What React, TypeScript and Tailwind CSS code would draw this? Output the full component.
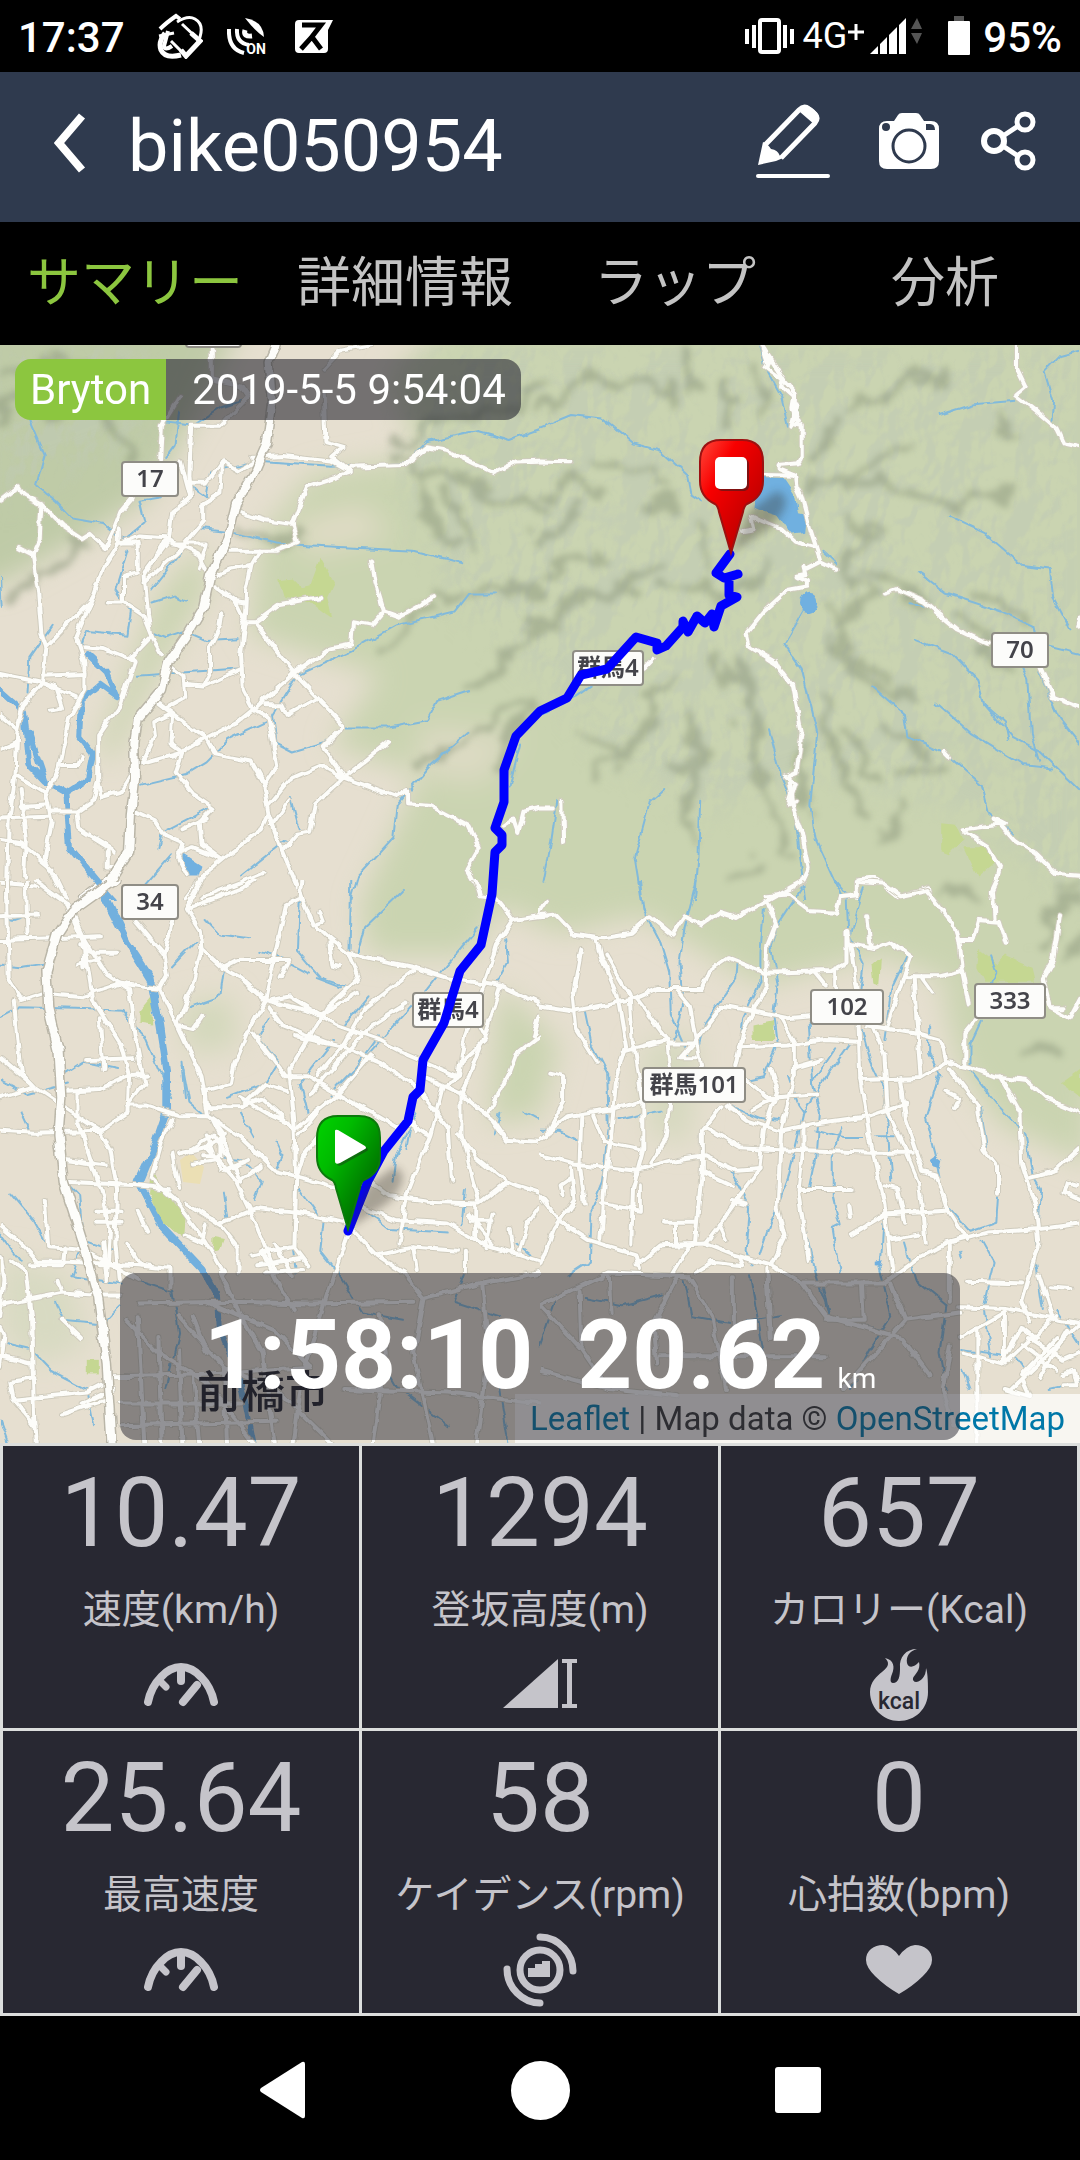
import React, { useState } from "react";

interface TileProps {
  x: number;
  y: number;
  height: number;
  shades: string[];
  parks: string[];
  lakes: string[];
  rivers: string[];
  wideRivers: string[];
  roads: string[];
  highways: string[];
}

interface ShieldProps {
  x: number;
  y: number;
  width: number;
  label: string;
}

interface StatProps {
  value: string;
  label: string;
  icon: React.ReactNode;
}

// every tile is drawn on a 1568 x 1568 grid
const tiles: TileProps[] = [
  {
    // north west
    x: 0,
    y: -5,
    height: 560,
    shades: [
      "M1200 370L1250 480L1290 580L1330 560M1300 430L1400 590M1180 350L1330 390L1568 470",
      "M1150 300L1250 240L1480 190L1568 130M1568 690L1440 700L1350 690L1250 720",
      "M1568 790L1480 860L1440 940L1350 980M1568 1000L1440 1030L1400 1090L1200 1200",
      "M0 200L100 160L200 200M20 100L200 60L350 90M300 200L380 300L340 330M220 580L130 660L30 700",
      "M1568 1010L1480 1100L1450 1200M700 520L860 560M1240 760L1100 860",
    ],
    parks: ["M805 670L850 665L880 695L900 690L930 610L970 680L950 720L965 780L910 740L820 720Z"],
    lakes: ["M530 1440L585 1475L575 1505L545 1505L528 1480Z"],
    wideRivers: [
      "M255 880L310 930L340 1000L290 965L235 1010L230 1110L270 1160L255 1230L190 1270L200 1420L290 1525L330 1568",
      "M0 980L70 1040L85 1190L130 1235L185 1265M85 1100L130 1230",
    ],
    rivers: [
      "M85 220L130 320L105 410L160 450L210 500L300 515L360 560L420 510L405 450L470 440",
      "M520 200L510 290L480 330M540 400L600 440L610 370L735 340L960 355L1180 345L1240 285L1390 255L1480 280L1568 250",
      "M590 530L680 540L800 570L1000 580L1200 590L1345 625M370 590L335 700L380 760L370 825L250 815L235 860",
      "M520 600L440 700M440 735L510 715L540 730M445 820L480 835L540 815L600 840L690 835M400 940L540 930L690 920",
      "M860 940L1020 870L1150 800L1320 760L1360 710L1440 710",
      "M860 940L790 1050L800 1130L850 1155L940 1130L1000 1085L1130 1085L1240 1065L1270 1010L1365 980",
      "M770 1070L660 1120L600 1180L540 1215L410 1245M1360 1100L1250 1190L1155 1300L1145 1390L1040 1500L1020 1568",
      "M845 1280L870 1370M610 1310L470 1380L460 1420M150 800L85 890L80 990M830 1400L700 1500M420 1530L500 1440",
      "M480 230L560 240L640 190L700 170M0 660L5 750M1510 1130L1480 1250",
    ],
    highways: [
      "M800 14L780 60L790 180L775 290L735 380L685 460L660 560L610 660L590 750L540 830L490 900L470 980L400 1060L390 1130L392 1230L380 1330L375 1430L330 1500L240 1568",
    ],
    roads: [
      "M615 30L615 110L700 130L720 160L640 240L555 240L550 380L555 440L500 480L490 560L420 650",
      "M465 335L470 240L520 160M0 450L55 410L70 435L120 460L180 520L235 555L260 540L305 580L330 530L350 480L385 440",
      "M120 460L115 560L95 600L110 700L120 820L135 860L125 960L70 1020L50 1100L45 1220L25 1350L20 1568M55 580L95 600",
      "M345 530L345 570L400 570L400 640M345 570L300 640L265 730L220 830L245 900L245 980L200 1060L170 1200L135 1280L150 1350L130 1450L190 1568",
      "M265 730L135 860M0 935L125 960L220 1000M125 940L245 935",
      "M245 860L300 865L390 900L350 1020L285 1110L285 1230L295 1280L350 1265L390 1200",
      "M350 570L400 550L480 555L575 600L610 660M480 560L420 660L430 770L440 830L380 890L390 900M440 830L470 880",
      "M310 735L360 735L415 770L440 830M400 650L360 660L360 735M420 680L520 590L590 510L590 460L640 430L645 340L690 365L735 340",
      "M555 400L600 400L645 340M525 340L550 430M500 570L600 570L580 640",
      "M735 330L820 325L960 340L1015 370L890 410L850 510L865 565L800 590L660 590M690 480L770 505L850 515",
      "M1015 355L1175 350L1240 300L1300 310L1430 370L1500 340L1568 338M940 150L945 285L1000 300L965 330L1015 370M940 80L990 30L1080 14",
      "M610 665L670 640L730 630L755 590M730 630L715 700L710 790L700 880L705 980L735 1035L780 1060L805 1190L765 1250L780 1330L820 1430L880 1568",
      "M625 690L680 730L710 790L740 790L810 740L930 720M680 730L710 735M740 790L860 940L1000 1080L940 1140L1000 1225",
      "M735 1035L860 930L965 860L1020 850L1025 790L1080 800L1115 760L1160 775L1260 720M1080 620L1090 680L1115 760",
      "M770 1020L820 1020L835 1050L920 1005M735 1035L690 1070L600 1115L530 1155L400 1190",
      "M645 765L640 800L610 860L610 930L590 970M490 910L530 940L535 1000L480 1030M535 965L590 970L700 920",
      "M440 1000L550 1080L600 1115L625 1160L730 1180L765 1240M500 1045L495 1130L530 1155L510 1210L560 1270L620 1310L580 1350L585 1410L640 1450",
      "M415 1180L450 1110L445 1070L500 1045M780 1330L760 1370L650 1450L600 1490L540 1568M640 1450L560 1420L520 1440",
      "M780 1300L840 1230L935 1190L1000 1225L1150 1280L1185 1260L1185 1300L1250 1305L1360 1360L1390 1420L1355 1480L1400 1560",
      "M1000 1225L1130 1125M1000 1225L915 1300L900 1380L860 1385L820 1430M790 1360L840 1290",
      "M150 1320L225 1320L270 1290L285 1230M225 1320L230 1370L330 1430M395 1320L450 1345L480 1390L530 1410L520 1450L545 1500",
      "M0 1050L50 1090M50 1220L135 1270M0 1340L140 1335M0 1400L60 1410L150 1480M0 1520L130 1530M60 1260L75 1400L70 1500",
      "M1568 1310L1520 1320L1505 1380L1490 1340L1460 1360M590 1560L700 1520L765 1495M310 1430L310 1480L350 1480M145 1035L180 1030L160 970L125 960M180 1190L230 1190L240 1165",
      "M60 1305L140 1300M0 1150L45 1130M530 1370L600 1340",
    ],
  },
  {
    // north east
    x: 540,
    y: -5,
    height: 560,
    shades: [
      "M0 190L80 150L150 90L200 130L340 100L420 180M420 40L450 150M540 120L545 260M620 60L640 200",
      "M780 400L950 410L1100 430L1300 450L1390 420M900 500L950 560L900 640L960 720L880 800",
      "M850 720L880 900L960 960L1100 1000M900 520L980 520M840 880L900 900M860 780L900 860",
      "M520 880L590 1000L620 1140L680 1300L720 1420M450 1060L460 1170L430 1300L440 1400",
      "M140 1230L240 1150L310 1070L330 1000L380 980M150 1110L230 1150M280 1110L250 1180M580 900L600 1020",
      "M770 1140L760 1300M820 850L1000 940M900 200L1050 120L1200 100M1100 300L960 350L860 390M1340 200L1370 280",
      "M0 560L120 480M300 460L400 470M320 400L380 420M0 800L120 720L250 710M340 690L600 700L680 620",
      "M820 1000L870 1200L940 1340M1040 1200L1160 1200M1280 680L1420 780M1200 780L1350 900M960 640L1100 740",
      "M0 430L90 380L170 440M180 330L320 360M0 650L180 600M460 520L500 640M380 1180L430 1180M860 240L820 330",
      "M1000 1050L1120 1160M1060 1300L1010 1400M560 1500L640 1460M900 1080L960 1240M200 700L330 620",
    ],
    parks: ["M1165 1350L1210 1355L1230 1400L1190 1440L1165 1430Z", "M1230 1420L1290 1420L1325 1460L1270 1505Z"],
    lakes: [
      "M630 385L710 390L745 440L752 485L775 490L770 540L730 545L690 490L620 470Z",
      "M755 735a25 27 0 1 0 50 0a25 27 0 1 0 -50 0Z",
    ],
    wideRivers: [],
    rivers: [
      "M640 20L660 90L700 160L720 240M0 245L90 210L180 220L270 290L350 310L430 380L440 430L470 450M1160 210L1260 180L1380 170",
      "M1568 30L1510 45L1465 90L1490 170L1485 230M1190 495L1290 540L1400 630L1480 640L1490 720L1540 810",
      "M1100 650L1180 710L1340 760L1430 800L1440 850L1568 880M1070 740L1130 745L1200 800",
      "M1090 840L1200 880L1270 950L1290 1020L1370 1110L1450 1150L1568 1260M965 970L1060 1050L1070 1110L1180 1160L1280 1245L1300 1320L1370 1380",
      "M1150 1015L1250 1100L1400 1190L1490 1200M1390 900L1415 950L1425 1100L1450 1180M770 750L710 850L760 920L805 1100L785 1300L800 1400L880 1568",
      "M665 1090L700 1220L740 1320L770 1568M355 1260L320 1290L275 1450L295 1568M465 1290L460 1450L450 1568M50 1290L30 1420L10 1520",
      "M160 960L100 1000L0 1050M1450 930L1510 1060L1568 1130M820 590L860 625M1290 1020L1350 1070L1360 1120",
    ],
    highways: [],
    roads: [
      "M645 14L665 60L655 75L705 110L700 130L735 160L730 190L745 220L735 235L760 240L760 330L750 345L690 350L690 360L740 380",
      "M650 20L670 50L690 80L715 120L740 150L740 200L755 230M740 380L745 410L760 440L785 530L815 620L860 640",
      "M650 378L740 380M610 490L640 505L700 530L740 565L800 580M610 490L620 530L590 535M660 60L650 30M745 180L730 240",
      "M815 620L775 640L765 635L770 655L745 660L775 675L775 690L720 700L650 760L600 820L610 860L680 900L735 970L760 1100L745 1210L720 1220L735 1310L760 1380L780 1480L760 1520L660 1568",
      "M660 895L700 920L690 900M710 1220L740 1240L720 1300L745 1290M1385 14L1385 80L1410 130L1380 155L1440 200L1500 250L1520 290L1568 300",
      "M1005 710L1040 700L1110 730L1210 810L1300 850M1450 910L1490 1000L1568 1030",
      "M1230 1370L1350 1355L1320 1340L1375 1400L1440 1440L1500 1495L1568 1500M1235 1380L1300 1420L1335 1480L1310 1568",
      "M920 1568L925 1510L970 1505L1040 1560L1130 1535L1135 1568M0 340L85 342M0 1312L40 1312M65 1290L67 1405M300 920L330 890M1175 1155L1190 1170M1568 780L1560 800",
    ],
  },
  {
    // south west
    x: 0,
    y: 535,
    height: 570,
    shades: [],
    parks: [
      "M440 800L500 870L540 910L535 985L470 940L430 860Z",
      "M405 360L440 320L445 400L405 395Z",
      "M252 1320h35v40h-35Z",
      "M620 985L650 990L640 1015L618 1020Z",
    ],
    lakes: [],
    wideRivers: [
      "M280 0L300 30L370 170L440 270L465 400L485 520L485 640L440 760L405 840L470 950L590 1070L630 1140L635 1230L700 1380L740 1568",
      "M302 50L370 175L435 275L460 400L480 520L480 640L440 750L400 830L465 950L585 1070L625 1140",
    ],
    rivers: [
      "M0 235L60 240L130 230M0 380L60 350L250 355L350 360L420 430L460 520L500 600M190 530L240 500L340 520M1020 0L1015 190",
      "M1170 30L1060 130L1040 200M870 60L865 200L930 270L1000 290M500 240L570 170M650 250L640 320L550 350M530 510L550 610L600 650",
      "M780 380L750 430L810 500L770 560L660 600M1470 160L1475 230L1440 290M1390 130L1290 240L1240 300L1080 470L960 590",
      "M1100 430L1000 560M970 440L870 560L890 640M1210 640L1150 760L1140 830M620 760L700 770L760 830L740 880M650 860L660 930",
      "M30 860L100 940L130 990M190 830L230 870L240 990L330 1020M0 970L60 1050M940 930L930 1020L980 1080L1050 1190L1170 1210",
      "M0 1270L90 1290L150 1350L250 1400L270 1500M160 1160L180 1210L300 1220L350 1170M870 850L930 930M1050 900L1130 960L1300 970",
      "M1350 850L1340 950M0 1490L30 1568M600 110L640 150L720 160M0 100L40 110L100 90M0 550L80 590L200 560M60 640L90 700",
      "M750 195L830 215M840 230L900 260M920 270L990 295M1450 640L1440 700M1520 635L1568 660M1190 690L1180 740M540 600L530 500",
      "M400 1100L500 1130L520 1250L480 1400M1100 1300L1160 1400L1300 1500M1450 1400L1480 1568M1350 1080L1320 1160L1450 1200M1500 1000L1540 1030",
      "M800 720L820 760L800 800M700 640L740 710M1070 320L1000 400M850 1010L860 1080M240 1000L210 1090L350 1110",
    ],
    highways: [
      "M335 0L210 85L165 150L135 250L140 350L170 470L178 600L170 700L185 830L245 1010L285 1150L310 1330L325 1568",
    ],
    roads: [
      "M0 100L110 95M20 0L25 270L65 330L130 310L235 320L350 285L465 300M75 0L80 150M0 165L160 160L290 155",
      "M100 0L200 70L250 170L310 260L375 300L390 420L420 560L370 620M195 70L245 180L270 330L350 450L375 540L370 640",
      "M230 180L280 200L340 200M230 230L290 215M240 160L245 240M395 115L475 205L485 265L465 300L515 400L585 540L605 650M500 115L475 205",
      "M585 0L540 80L580 140L585 190L650 245L700 270L770 330L720 420L680 510L670 560L600 580M540 80L640 45L710 20L740 0",
      "M585 190L560 290L515 400L560 410L590 370M875 0L870 50L830 70L800 200L770 330M870 30L910 120L955 160L1010 200L1100 220L1200 240L1300 270L1450 290L1568 340",
      "M910 125L940 115L930 90M955 160L965 235L985 240M640 245L690 220L840 220L815 270M1380 0L1395 45L1440 50L1490 110L1568 100",
      "M1490 110L1440 180L1415 260L1350 430L1330 540L1285 570L1250 700L1180 870M1450 300L1410 420L1340 590L1340 700L1390 880",
      "M1010 200L1040 270L950 350L840 520L855 670L860 820L855 1010L895 1060M1200 250L1060 350L1000 450L920 540",
      "M770 330L900 360L980 400L1100 440L1180 480L1330 540M790 330L840 320L930 370L1040 310M780 350L820 400L960 450",
      "M735 420L830 540L890 540L980 590L1080 640L1150 680L1200 670L1210 690M860 430L1000 460L1100 500L1210 570L1300 680L1310 830",
      "M1230 540L1340 590L1430 660L1470 715L1568 720M1568 430L1500 480L1480 530L1420 640M1568 370L1550 430M1380 380L1410 440L1340 500",
      "M600 580L605 625L700 625L760 600L850 680M700 625L770 560L830 580M190 580L290 575L370 540L430 535M700 600L770 640L860 680L980 590",
      "M370 620L420 620L520 650L610 650L700 710L800 800L900 825L990 850M0 690L100 695L290 690L320 740L340 850L335 1000L345 1100",
      "M0 490L100 570L210 640L290 690L370 640M0 600L100 570L60 530L40 330M225 580L225 660L300 870L320 960L310 1100",
      "M190 830L400 840L490 850M190 770L310 785M500 660L470 720L440 820L500 870L600 1000L650 1080M250 495L390 490M290 380L300 520",
      "M520 750L600 735L680 820L740 940L800 1080M600 735L650 700L620 660L660 740L700 830M690 830L760 790M590 760L640 760L640 710M500 750L520 850",
      "M640 945L740 905L860 915L1000 940L1090 1030L1170 1080M540 890L640 950L690 1010L690 1080M1010 970L970 1080M540 980L590 1000L600 950",
      "M1060 820L1130 870L1240 885L1390 890L1470 830L1568 860M1470 830L1380 760L1330 700M1240 700L1180 660M870 700L920 640M860 820L880 760L940 690",
      "M1050 900L1150 935L1300 945L1400 1000L1568 1050M1090 1030L1190 1010L1330 1020M1360 920L1430 1000M1380 890L1380 990M1430 920L1410 1010M1370 940L1430 940",
      "M0 950L50 990L110 1050L200 1050L400 1060L495 1070L495 1120M130 880L140 1010L210 1015L250 1020L400 1100M30 1050L75 1080L90 1200L100 1500L105 1568",
      "M0 1170L180 1135L270 1140L350 1140M30 1380L100 1370M40 1430L250 1410L310 1380M30 1380L40 1430L100 1500M180 1210L235 1260M0 1310L90 1330",
      "M0 1200L10 1100L0 1040M170 1100L180 1130M90 1060L180 1060L185 1010M280 910L350 910M280 940L350 940M400 910L430 970M370 1000L410 1060",
      "M370 1210L460 1300L600 1380L750 1568M520 1200L650 1340L800 1400L980 1568M400 1165L650 1160L900 1165L1200 1160M640 1080L700 1200L760 1300L800 1568",
      "M330 1365L560 1360L900 1340M970 1080L930 1200L880 1350L850 1568M1170 1080L1230 1150L1200 1300L1260 1568M1230 1150L1400 1110L1568 1080",
      "M400 1200L420 1568M460 1260L470 1568M520 1300L530 1568M350 1440L700 1440M350 1500L800 1490M560 1200L600 1300M600 1160L800 1240L900 1340M560 1360L580 1568M650 1340L660 1568M1000 1400L1300 1410L1568 1440M1100 1200L1120 1300L1080 1568M1400 1110L1420 1300L1380 1568",
      "M760 1020L800 1100L850 1180M730 1030L850 1010M750 1060L870 1040M770 1080L880 1070M800 1000L850 1090M290 1060L350 1060M300 1000L310 1100M330 1400L240 1440M180 1470L310 1430M0 1340L10 1250L0 1230",
      "M540 750L620 700L680 790M560 780L630 770M600 700L640 800M650 800L720 770M900 590L1000 480L1080 400L1180 340M980 590L1080 480M1480 960L1490 1030M1568 900L1530 950L1510 1020M1350 1020L1350 1080M1160 1000L1180 880M1200 1010L1210 1070",
    ],
  },
  {
    // south east
    x: 540,
    y: 535,
    height: 570,
    shades: ["M1568 60L1480 100L1450 180M1568 20L1520 40M1568 160L1530 220M1180 30L1260 20M1400 470L1500 460"],
    parks: [
      "M1275 190L1330 230L1350 205L1430 240L1440 280L1290 280L1270 240Z",
      "M620 400L680 388L680 440L620 440Z",
      "M960 240L990 215L985 290L965 285Z",
      "M1568 520L1510 560L1568 600Z",
    ],
    lakes: [
      "M1135 770L1150 760L1165 770L1160 790L1140 785Z",
      "M975 1050L995 1045L990 1062L975 1060Z",
    ],
    wideRivers: [],
    rivers: [
      "M290 0L300 80L350 170L375 250L380 370L430 480M455 0L420 130L405 230L415 350L390 440M760 20L690 120L670 180L690 290L680 370L690 450L650 540L600 550",
      "M650 80L640 200L640 280L590 380L575 500M575 220L570 270L480 390L460 460M855 0L890 40L895 140L940 230L930 300M940 20L900 160",
      "M1065 210L1020 300L1000 440M130 360L150 450L195 530L200 680L180 830L150 900L145 1050L80 1090M900 450L840 530L765 640L720 820L680 920L640 1030",
      "M780 390L790 560L810 640L800 760L780 850M935 410L960 500L1000 580L1010 680L1020 830M1155 540L1120 650L1150 760L1170 880L1250 965L1325 940L1330 870",
      "M1195 530L1280 630L1300 750M1280 390L1250 450L1250 520L1330 620L1410 700L1430 810L1455 850L1440 1050L1460 1180",
      "M800 690L880 710L940 710M980 705L1030 705M875 680L850 760L850 870L870 950L850 960L870 1080M555 800L610 900L600 1020L620 1060M550 620L640 655L700 660",
      "M225 660L350 635M1285 990L1320 1050L1290 1170L1310 1310M750 880L800 1080L840 1200M1060 1000L1090 1100L1180 1170M0 690L60 690L110 715",
      "M130 1150L240 1170L360 1140M610 1090L650 1300M985 1060L1020 1200L960 1290L900 1400M820 1110L840 1200L1000 1240M1180 1170L1160 1300L1180 1400M50 1140L0 1280",
      "M1310 210L1325 250L1310 280M1220 1020L1225 1040M1130 400L1130 480L1160 540M1000 900L990 1050M720 540L750 620L765 640M860 460L790 560",
      "M420 1100L440 1200L560 1220L700 1200M1220 1290L1380 1310L1420 1360M1500 1180L1568 1280M1230 1350L1250 1400M1480 1400L1568 1380",
    ],
    highways: [],
    roads: [
      "M0 100L45 95L100 150L170 160L265 145L320 100L385 150L420 100L470 125L520 90L570 105L655 60L760 5M0 90L20 60",
      "M655 45L720 40L780 85L860 90L870 50L920 45L920 5L1000 10L1050 45L1125 30L1170 85L1200 120L1215 165L1260 165L1275 110L1335 115L1355 175M1320 110L1315 30L1330 0",
      "M165 165L175 210L225 320L250 460L220 560L205 720L185 860L175 990M190 205L260 320L270 450L300 620L300 740L270 850L265 1000",
      "M0 345L100 360L280 325L340 300L470 300L490 250L545 215L650 255L850 250L890 230L890 140M120 190L95 320L105 410L165 500",
      "M660 60L685 120L660 180L655 290L590 420L570 515M280 325L370 440L380 560L365 710L320 780M400 310L435 350L460 480L465 510",
      "M370 450L445 450L530 345L610 360L720 380L785 375M250 470L365 440M445 450L410 490L450 490M800 255L830 290M860 240L860 295M895 140L920 300",
      "M900 175L970 190L1020 170L1075 210L1010 400M950 100L960 180M1065 265L1160 265L1225 250L1215 165M1225 250L1245 340",
      "M1085 265L1090 340L1105 540M1110 270L1140 310M925 395L930 550L960 720L1000 890L1020 1080M965 400L1000 480L1010 640L1060 740L1100 830",
      "M580 460L720 455L830 440L920 445M700 380L740 450L740 540L700 690L690 900L710 980L670 1060M740 515L815 495",
      "M950 400L1110 425L1165 440L1180 500L1105 545L930 550M1180 500L1250 515L1320 540L1410 550L1470 600L1568 640M1265 385L1235 420L1235 510",
      "M1190 520L1270 620L1290 740L1330 790L1330 860M1335 540L1395 640L1400 780L1440 900L1450 1000L1400 1160L1420 1210",
      "M0 715L40 680L80 650L220 630L290 610M30 530L70 540L70 610L20 700M0 755L100 780L280 800L400 770L480 760L570 800L640 795",
      "M530 620L470 690L470 800L450 1000M545 620L600 660L700 690L800 670L950 650L1060 615M480 680L580 735L680 740L960 750L1080 750",
      "M640 795L650 690L690 580L670 520M600 550L660 600L800 590M620 630L680 600M640 795L580 870L520 950L480 1000M470 800L560 840",
      "M765 670L765 740L750 860L780 1045M760 850L905 850M895 895L900 930M1420 820L1500 800L1568 740M1045 545L1060 660L1110 800L1150 810L1180 900L1240 990",
      "M905 975L1000 920L1180 910M1100 830L1110 910L1120 1000M1000 840L1040 850L1060 940M1010 990L1100 975M0 870L60 940L140 990L280 1030L290 1070",
      "M0 1060L40 960L100 880L90 790M280 1060L350 1005L480 1000L560 1030L670 1060L760 1110L1000 1110L1100 1040L1180 1000L1300 970L1450 960L1568 945",
      "M360 940L450 940M395 940L395 1000M175 890L290 910L290 840M120 650L115 780L130 890M155 650L185 720L290 740M65 870L60 840L90 820M520 950L540 990M560 880L600 890",
      "M1510 100L1490 220L1460 270L1480 350L1540 380L1568 330M1480 350L1520 350M1190 1005L1190 1160M1240 1105L1400 1110M1220 1175L1350 1180L1568 1220M1480 1120L1540 1125",
      "M1220 1260L1350 1190L1350 1330L1500 1200M1230 1300L1340 1330L1400 1230L1440 1260M1370 1400L1568 1220M1270 1230L1270 1568M1450 1090L1490 1210M1568 840L1530 830L1520 860L1568 880",
      "M1350 1400L1420 1420L1400 1380M1520 1360L1550 1350L1560 1390L1520 1390M1400 1280L1500 1350M1420 1260L1520 1320L1568 1300M1180 580L1220 600L1205 630M1400 1360L1500 1260M1450 1370L1530 1240",
      "M0 1170L200 1080L430 1090M0 1170L120 1290L200 1400L400 1420M350 1310L830 1310M430 1090L500 1200L540 1400M660 1070L670 1260M760 1110L830 1200L1050 1260L1130 1360",
      "M1020 1110L1060 1210L1220 1190M1060 1210L880 1400M830 1210L940 1210L935 1110M400 1090L330 1220L340 1330M560 1090L560 1300M115 1130L120 1280M380 1090L430 1010M450 1080L500 1050L590 1060L580 1040M200 1090L205 1190M0 1350L200 1400M1190 1280L1170 1400L1200 1500",
    ],
  },
];

const shields: ShieldProps[] = [
  { x: 186, y: -32, width: 55, label: "" },
  { x: 122, y: 117, width: 56, label: "17" },
  { x: 992, y: 288, width: 56, label: "70" },
  { x: 573, y: 306, width: 70, label: "群馬4" },
  { x: 122, y: 540, width: 56, label: "34" },
  { x: 811, y: 645, width: 72, label: "102" },
  { x: 975, y: 639, width: 70, label: "333" },
  { x: 413, y: 648, width: 70, label: "群馬4" },
  { x: 643, y: 723, width: 102, label: "群馬101" },
];

const track =
  "730,209 716,228 724,233 738,229 729,232 729,250 737,252 721,261 714,282 712,269 705,278 697,271 688,287 683,276 683,282 666,301 657,305 657,298 636,292 607,324 581,330 567,353 540,366 516,391 504,425 504,457 495,483 502,490 502,500 495,507 492,549 481,600 460,626 444,678 423,715 420,745 413,752 408,776 384,806 368,836 348,886";

const line = (d: string, stroke: string, strokeWidth: number) => (
  <path key={d} d={d} stroke={stroke} strokeWidth={strokeWidth} vectorEffect="non-scaling-stroke" />
);

const Tile: React.FC<TileProps> = ({
  x,
  y,
  height,
  parks,
  lakes,
  rivers,
  wideRivers,
  roads,
  highways,
}) => (
  <svg x={x} y={y} width="540" height={height} viewBox="0 0 1568 1568" preserveAspectRatio="none">
    <g fill="none" strokeLinecap="round" strokeLinejoin="round">
      {parks.map((d) => (
        <path key={d} d={d} fill="#c5d792" />
      ))}
      {rivers.map((d) => line(d, "#82badb", 2))}
      {wideRivers.map((d) => line(d, "#72b0de", 6))}
      {lakes.map((d) => (
        <path key={d} d={d} fill="#70b0e0" />
      ))}
      {roads.map((d) => line(d, "#cfcbbd", 6))}
      {roads.map((d) => line(d, "#fdfdfa", 4))}
      {highways.map((d) => line(d, "#bab6a8", 11))}
      {highways.map((d) => line(d, "#fdfdfa", 8))}
    </g>
  </svg>
);

// pin of 65 x 116, the tip is at the bottom
const Marker = ({ x, y, type }: { x: number; y: number; type: "start" | "stop" }) => (
  <g transform={`translate(${x} ${y})`}>
    <path d="M32 114L50 72L78 52Q98 60 72 88Z" fill="#332f28" opacity="0.35" filter="url(#soft)" />
    <path
      d="M22 1H43Q64 1 64 23V42Q64 58 48 65Q45 67 44 73L32 114L20 73Q19 67 16 65Q1 58 1 42V23Q1 1 22 1Z"
      fill={type === "start" ? "url(#pinGreen)" : "url(#pinRed)"}
      stroke={type === "start" ? "#0b7a0b" : "#9c1111"}
      strokeWidth="2"
    />
    {type === "start" ? (
      <path
        d="M19 16Q19 14 22 15L49 31Q51 33 49 34L24 48Q19 50 19 46Z"
        fill="#222"
        opacity="0.4"
        transform="translate(2 2)"
      />
    ) : (
      <rect x="18" y="20" width="32" height="32" rx="5" fill="#222" opacity="0.5" />
    )}
    {type === "start" ? (
      <path d="M19 16Q19 14 22 15L49 31Q51 33 49 34L24 48Q19 50 19 46Z" fill="#fff" />
    ) : (
      <rect x="16" y="18" width="32" height="32" rx="5" fill="#fff" />
    )}
  </g>
);

const RideMap = () => (
  <svg
    className="absolute inset-0 h-full w-full"
    viewBox="0 0 1080 1098"
    preserveAspectRatio="xMidYMid slice"
    role="img"
    aria-label="Map"
  >
    <defs>
      <filter id="soft" x="-20%" y="-20%" width="140%" height="140%">
        <feGaussianBlur stdDeviation="4" />
      </filter>
      <filter id="ground" x="-20%" y="-20%" width="140%" height="140%">
        <feGaussianBlur stdDeviation="14" />
      </filter>
      <filter id="wobble" filterUnits="userSpaceOnUse" x="-10" y="-10" width="1100" height="1118">
        <feTurbulence type="fractalNoise" baseFrequency="0.07" numOctaves="2" seed="3" />
        <feDisplacementMap in="SourceGraphic" scale="7" xChannelSelector="R" yChannelSelector="G" />
      </filter>
      <filter id="ridges" filterUnits="userSpaceOnUse" x="-10" y="-10" width="1100" height="1118">
        <feTurbulence type="fractalNoise" baseFrequency="0.03" numOctaves="3" seed="5" result="noise" />
        <feDisplacementMap in="SourceGraphic" in2="noise" scale="44" xChannelSelector="R" yChannelSelector="G" />
        <feGaussianBlur stdDeviation="3" />
      </filter>
      <filter id="relief" x="0" y="0" width="100%" height="100%">
        <feTurbulence type="fractalNoise" baseFrequency="0.022 0.014" numOctaves="4" seed="8" />
        <feGaussianBlur stdDeviation="1" />
        <feDiffuseLighting surfaceScale="40" lightingColor="#fff">
          <feDistantLight azimuth="225" elevation="50" />
        </feDiffuseLighting>
        <feColorMatrix values="0 0 0 0 0.53  0 0 0 0 0.59  0 0 0 0 0.46  -1.6 0 0 0 1.35" />
      </filter>
      <mask id="hills">
        <g fill="#fff" filter="url(#ground)">
          <path d="M440 0H1080V560L960 460L820 430L700 470L600 400L530 320L450 250L400 120Z" />
          <path d="M0 0H150L140 100L60 130L0 160Z" />
        </g>
      </mask>
      <linearGradient id="pinRed" x1="0" y1="0" x2="1" y2="1">
        <stop offset="0" stopColor="#ff4a3c" />
        <stop offset="0.3" stopColor="#f80000" />
        <stop offset="0.75" stopColor="#c20000" />
        <stop offset="1" stopColor="#8c0000" />
      </linearGradient>
      <linearGradient id="pinGreen" x1="0" y1="0" x2="1" y2="1">
        <stop offset="0" stopColor="#00d400" />
        <stop offset="0.3" stopColor="#00bb00" />
        <stop offset="0.7" stopColor="#007a00" />
        <stop offset="1" stopColor="#005500" />
      </linearGradient>
    </defs>

    {/* Ground */}
    <rect width="1080" height="1098" fill="#e6dfd0" />
    <g filter="url(#ground)" fill="#cad4b1">
      <path d="M-40 -40H250L200 60L150 150L90 190L0 240L-40 240Z" fill="#bfcba7" />
      <path d="M470 -40H1120V760L1020 690L960 640L880 610L760 640L640 570L560 590L500 560L470 610L370 610L360 560L420 430L330 400L380 330L250 290L260 190L310 130L420 110L390 30Z" />
      <path d="M160 250L200 200L210 240L150 340L110 420L100 400Z" />
      <path d="M500 640L560 700L540 770L490 780Z" />
      <path d="M940 640L1090 660V820L1000 780L960 720Z" />
      <path d="M180 660L230 650L240 700L190 710Z" fill="#d3d8bb" />
      <path d="M0 910L70 930L90 1000L40 1020L0 990Z" fill="#d8dac2" />
      <path d="M640 700L700 690L690 800L650 790Z" fill="#d6d9bf" />
      <path d="M290 180L360 160L390 190L310 210Z" fill="#e0dcc6" />
      <path d="M420 380L520 390L480 440L420 430Z" fill="#dcdac3" />
    </g>
    <g mask="url(#hills)">
      <rect width="1080" height="640" filter="url(#relief)" opacity="0.6" />
    </g>
    <g filter="url(#ridges)" opacity="0.5" fill="none" strokeLinecap="round" strokeLinejoin="round">
      {tiles.map(({ x, y, height, shades }) => (
        <svg
          key={`${x}-${y}`}
          x={x}
          y={y}
          width="540"
          height={height}
          viewBox="0 0 1568 1568"
          preserveAspectRatio="none"
          overflow="visible"
        >
          {shades.map((d) => line(d, "#8b967b", 9))}
        </svg>
      ))}
    </g>
    <path d="M180 815L191 807L204 822L200 839L183 837Z" fill="#ebdfb4" />

    <g filter="url(#wobble)">
      {tiles.map((tile) => (
        <Tile key={`${tile.x}-${tile.y}`} {...tile} />
      ))}
    </g>

    {/* Road numbers */}
    {shields.map(({ x, y, width, label }) => (
      <g key={`${x}-${y}`}>
        <rect x={x} y={y} width={width} height="34" rx="3" fill="#fcfcfa" stroke="#8f8d85" strokeWidth="2" />
        <text
          x={x + width / 2}
          y={y + 25}
          textAnchor="middle"
          className="fill-[#44444a] font-['Noto_Sans','Noto_Sans_CJK_JP',sans-serif] text-[24px] font-semibold"
        >
          {label}
        </text>
      </g>
    ))}
    <text
      x="263"
      y="1063"
      textAnchor="middle"
      className="fill-[#1c1c24] font-['Noto_Sans_CJK_JP',sans-serif] text-[44px] font-medium"
    >
      前橋市
    </text>

    {/* Track */}
    <polyline
      points={track}
      fill="none"
      stroke="#0000ff"
      strokeWidth="9"
      strokeLinecap="round"
      strokeLinejoin="round"
    />
    <Marker x={316} y={770} type="start" />
    <Marker x={699} y={94} type="stop" />
  </svg>
);

const GaugeIcon = () => (
  <svg width="74" height="74" viewBox="0 0 74 74" fill="none" stroke="#c5c4ca" strokeLinecap="round">
    <path d="M4 54Q7 39 17 29Q26 19 37 19Q48 19 57 29Q67 39 70 54" strokeWidth="8" />
    <path d="M37 20V33" strokeWidth="8" />
    <path d="M15 32L22 39" strokeWidth="7" />
    <path d="M39 54L53 37" strokeWidth="8" />
  </svg>
);

const SlopeIcon = () => (
  <svg width="74" height="74" viewBox="0 0 74 74" fill="#c5c4ca">
    <path d="M0 60L55 11V60Z" />
    <path d="M59 11H74V15H69V56H74V60H59V56H64V15H59Z" />
  </svg>
);

const FlameIcon = () => (
  <svg width="74" height="74" viewBox="0 0 74 74">
    <path
      d="M55 1C47 3 44 9 45 15C46 20 52 20 57 14C59 22 53 26 51 30C50 34 55 36 60 31C63 28 64 24 64 20C66 25 66 38 66 44C66 61 53 73 37 73C21 73 8 60 8 44C8 34 15 28 20 24C28 18 27 14 23 10C32 12 33 19 30 26C28 31 28 35 31 35C37 35 38 28 38 20C37 9 44 1 55 1Z"
      fill="#c5c4ca"
    />
    <text
      x="37"
      y="61"
      textAnchor="middle"
      className="fill-[#282832] font-['Roboto',sans-serif] text-[23px] font-medium"
    >
      kcal
    </text>
  </svg>
);

const CadenceIcon = () => (
  <svg width="74" height="74" viewBox="0 0 74 74" fill="none" stroke="#c5c4ca" strokeLinecap="round">
    <circle cx="37" cy="37" r="20" strokeWidth="7" />
    <path d="M37 4Q51 4 61 15Q70 25 70 38" strokeWidth="7" />
    <path d="M4 36Q4 50 14 60Q24 70 37 70" strokeWidth="7" />
    <path d="M25 35H32V31H39V28H47V44H25Z" fill="#c5c4ca" stroke="none" />
  </svg>
);

const HeartIcon = () => (
  <svg width="74" height="74" viewBox="0 0 74 74" fill="#c5c4ca">
    <path d="M37 61Q23 53 13 43Q4 34 4 27Q4 20 9 16Q14 12 21 12Q30 13 37 23Q44 13 53 12Q60 12 65 16Q70 20 70 27Q70 34 61 43Q51 53 37 61Z" />
  </svg>
);

const stats: StatProps[] = [
  { value: "10.47", label: "速度(km/h)", icon: <GaugeIcon /> },
  { value: "1294", label: "登坂高度(m)", icon: <SlopeIcon /> },
  { value: "657", label: "カロリー(Kcal)", icon: <FlameIcon /> },
  { value: "25.64", label: "最高速度", icon: <GaugeIcon /> },
  { value: "58", label: "ケイデンス(rpm)", icon: <CadenceIcon /> },
  { value: "0", label: "心拍数(bpm)", icon: <HeartIcon /> },
];

const tabs = ["サマリー", "詳細情報", "ラップ", "分析"];

const StatusBar = () => (
  <div className="flex h-[72px] items-center justify-between px-[18px] text-[42px] leading-[50px] font-medium text-white">
    <div className="flex items-center">
      <span className="pt-1">17:37</span>
      <svg className="ml-8" width="46" height="46" viewBox="0 0 46 46" fill="none" stroke="#fff">
        <path d="M3 16Q9 10 19 3L23 6" strokeWidth="4" />
        <path d="M20 9Q31 2 38 6Q47 11 43 24Q41 30 37 35" strokeWidth="3" />
        <path d="M25 11L43 28L29 43L14 28" strokeWidth="3" />
        <path d="M34 20L43 28L29 43L24 37" strokeWidth="5" />
        <path d="M8 20Q1 29 4 37Q8 46 24 42" strokeWidth="5" />
        <path d="M2 23L17 20" strokeWidth="3" />
        <path d="M11 18L7 33Q8 38 15 33" strokeWidth="4" />
      </svg>
      <svg className="ml-6" width="40" height="38" viewBox="0 0 40 38" fill="none" stroke="#fff" strokeWidth="4">
        <path d="M18 1Q36 4 37 20Q28 14 18 1Z" fill="#fff" stroke="none" />
        <path d="M18 13Q16 20 25 19" strokeWidth="5" />
        <path d="M10 12Q9 26 22 28" />
        <path d="M2 12Q1 32 17 36" />
        <text
          x="29"
          y="37"
          textAnchor="middle"
          stroke="none"
          className="fill-white font-['Roboto',sans-serif] text-[14px] leading-none font-bold"
        >
          ON
        </text>
      </svg>
      <svg className="ml-7" width="40" height="36" viewBox="0 0 40 36">
        <path d="M4 2H38L33 12V31Q33 35 29 35H4Q0 35 0 31V6Q0 2 4 2Z" fill="#fff" />
        <path d="M7 7H26L16 20L6 31M17 19L26 31" fill="none" stroke="#000" strokeWidth="5" />
      </svg>
    </div>
    <div className="flex items-center">
      <svg width="50" height="38" viewBox="0 0 50 38" fill="#fff">
        <rect x="15" y="3" width="19" height="32" rx="2" fill="none" stroke="#fff" strokeWidth="4" />
        <rect x="0" y="12" width="4" height="15" />
        <rect x="7" y="8" width="4" height="23" />
        <rect x="38" y="8" width="4" height="23" />
        <rect x="45" y="12" width="4" height="15" />
      </svg>
      <span className="ml-2 flex items-start font-normal">
        <span className="text-[36px] leading-[50px]">4G</span>
        <svg className="mt-3" width="18" height="18" viewBox="0 0 18 18" stroke="#fff" strokeWidth="3">
          <path d="M1 9H17M9 1V17" />
        </svg>
      </span>
      <svg className="ml-1" width="54" height="38" viewBox="0 0 54 38">
        <path d="M1 37L9 29V37Z M11 27L18 20V37H11Z M20 18L28 10V37H20Z M30 8L37 1V37H30Z" fill="#fff" />
        <path d="M42 12L48 1L53 12Z M42 16H53L48 27Z" fill="#555" />
      </svg>
      <svg className="ml-6" width="24" height="40" viewBox="0 0 24 40">
        <rect x="7" y="0" width="10" height="6" fill="#555" />
        <rect x="1" y="5" width="22" height="34" rx="1" fill="#fff" />
      </svg>
      <span className="ml-3 pt-1">95%</span>
    </div>
  </div>
);

const Header = () => (
  <header className="flex h-[150px] items-center bg-[#2f3a4e] pr-11 pl-[54px] text-white">
    <button aria-label="戻る" className="pb-2">
      <svg width="32" height="60" viewBox="0 0 32 60" fill="none" stroke="#fff" strokeWidth="8">
        <path d="M28 3L5 30L28 57" />
      </svg>
    </button>
    <h1 className="ml-[42px] text-[72px] leading-[84px]">bike050954</h1>
    <div className="ml-auto flex items-center pb-3">
      <button aria-label="編集">
        <svg width="74" height="74" viewBox="0 0 74 74" fill="none" stroke="#fff">
          <path d="M9 41L43 6Q48 1 53 5L59 10Q63 14 59 19L25 54" strokeWidth="5" />
          <path d="M44 8L59 21L63 14Q62 8 56 4Q49 -1 44 8Z" fill="#fff" stroke="none" />
          <path d="M7 38Q12 40 15 45Q22 46 24 52L27 54L20 57L2 61Z" fill="#fff" stroke="none" />
          <path d="M2 72H72" strokeWidth="4" strokeLinecap="round" />
        </svg>
      </button>
      <button aria-label="写真" className="ml-12">
        <svg width="62" height="58" viewBox="0 0 62 58">
          <path d="M9 9H16L20 3Q21 1 24 1H38Q41 1 42 3L46 9H53Q61 9 61 17V49Q61 57 53 57H9Q1 57 1 49V17Q1 9 9 9Z" fill="#fff" />
          <circle cx="8" cy="15" r="4" fill="#2f3a4e" />
          <path d="M48 12H52Q57 12 57 18H48Z" fill="#2f3a4e" />
          <circle cx="31" cy="34" r="16" fill="#fff" stroke="#2f3a4e" strokeWidth="3" />
        </svg>
      </button>
      <button aria-label="共有" className="ml-10">
        <svg width="56" height="60" viewBox="0 0 56 60" fill="none" stroke="#fff" strokeWidth="5">
          <circle cx="14" cy="30" r="10" strokeWidth="6" />
          <circle cx="45" cy="11" r="8" />
          <circle cx="45" cy="49" r="8" />
          <path d="M23 25L38 15M23 35L38 45" />
        </svg>
      </button>
    </div>
  </header>
);

const App: React.FC = () => {
  const [activeTab, setActiveTab] = useState<number>(0);

  return (
    <div className="flex min-h-screen flex-col bg-black font-['Roboto','Noto_Sans_CJK_JP',sans-serif]">
      <StatusBar />
      <Header />

      {/* Tabs */}
      <nav className="grid h-[123px] grid-cols-4">
        {tabs.map((tab, index) => (
          <button
            key={tab}
            onClick={() => setActiveTab(index)}
            className={`text-[54px] leading-[64px] ${
              activeTab === index ? "text-[#8cc63f]" : "text-[#c3c3c3]"
            }`}
          >
            {tab}
          </button>
        ))}
      </nav>

      {/* Map */}
      <section className="relative min-h-[600px] flex-1 overflow-hidden">
        <RideMap />
        <div className="absolute top-[14px] left-[15px] flex overflow-hidden rounded-2xl text-[42px] leading-[61px] text-white">
          <span className="bg-[#8cc63f] px-[15px]">Bryton</span>
          <span className="bg-[#282832]/60 pr-[15px] pl-[26px]">2019-5-5 9:54:04</span>
        </div>
        <div className="absolute right-0 bottom-0 bg-white/70 px-[15px] text-[33px] leading-[49px] text-[#333333]">
          <a href="#leaflet" className="text-[#0078a8]">
            Leaflet
          </a>{" "}
          | Map data ©{" "}
          <a href="#osm" className="text-[#0078a8]">
            OpenStreetMap
          </a>
        </div>
        <div className="pointer-events-none absolute inset-x-30 bottom-[3px] flex h-[167px] items-baseline justify-center rounded-2xl bg-[#282832]/50 pt-[26px] text-white">
          <span className="text-[96px] leading-[112px] font-bold">1:58:10</span>
          <span className="ml-11 text-[96px] leading-[112px] font-bold">20.62</span>
          <span className="ml-3 text-[28px]">km</span>
        </div>
      </section>

      {/* Stats */}
      <dl className="grid grid-cols-3 gap-[3px] bg-[#dcdedd] p-[3px]">
        {stats.map(({ value, label, icon }) => (
          <div
            key={label}
            className="flex flex-col items-center bg-[#282832] pt-[11px] pb-[6px] text-[#c5c4ca]"
          >
            <dd className="text-[96px] leading-[112px]">{value}</dd>
            <dt className="mt-[18px] text-[39px] leading-[46px]">{label}</dt>
            <dd className="mt-[15px]">{icon}</dd>
          </div>
        ))}
      </dl>

      {/* Android navigation */}
      <nav className="flex h-36 items-center justify-center pb-1">
        <button aria-label="Back" className="flex w-[258px] justify-center pt-2">
          <svg width="46" height="58" viewBox="0 0 46 58" fill="#fff">
            <path d="M43 1Q46 0 46 3V55Q46 58 43 57L2 31Q0 29 2 27Z" />
          </svg>
        </button>
        <button aria-label="Home" className="flex w-[258px] justify-center pt-2">
          <span className="size-[59px] rounded-full bg-white" />
        </button>
        <button aria-label="Recent apps" className="flex w-[258px] justify-center pt-2">
          <span className="size-[46px] rounded-[3px] bg-white" />
        </button>
      </nav>
    </div>
  );
};

export default App;
